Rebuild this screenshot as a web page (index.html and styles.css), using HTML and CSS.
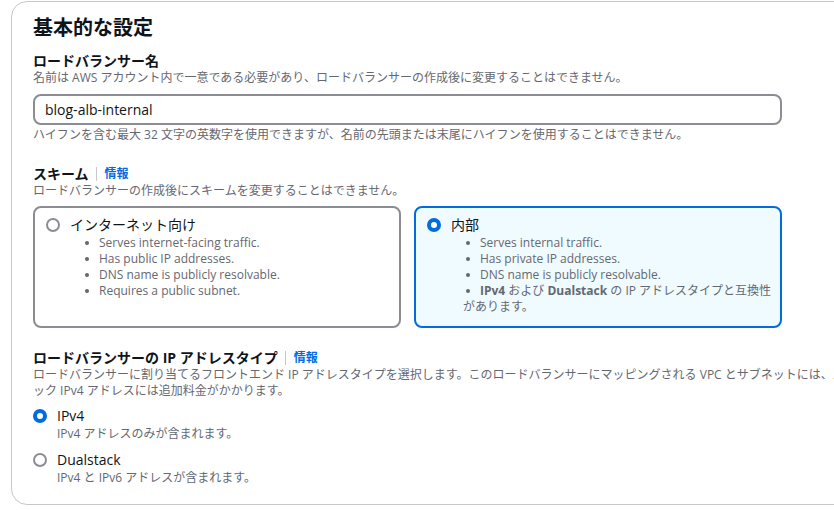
FILE: index.html
```html
<!DOCTYPE html>
<html lang="ja">
<head>
    <meta charset="UTF-8">
    <meta name="viewport" content="width=device-width, initial-scale=1.0">
    <title>基本的な設定</title>
    <link rel="stylesheet" href="styles.css">
</head>
<body>

    <div class="panel">
        <h2 class="panel-title">基本的な設定</h2>

        <div class="field">
            <div class="field-label">ロードバランサー名</div>
            <div class="field-desc">名前は AWS アカウント内で一意である必要があり、ロードバランサーの作成後に変更することはできません。</div>
            <div class="control">
                <input class="text-input" type="text" value="blog-alb-internal">
            </div>
            <div class="field-hint">ハイフンを含む最大 32 文字の英数字を使用できますが、名前の先頭または末尾にハイフンを使用することはできません。</div>
        </div>

        <div class="field field-scheme">
            <div class="field-label">
                <span>スキーム</span>
                <span class="sep"></span>
                <a href="#" class="info-link">情報</a>
            </div>
            <div class="field-desc">ロードバランサーの作成後にスキームを変更することはできません。</div>
            <div class="control tiles">
                <label class="tile">
                    <div class="tile-head">
                        <span class="radio"></span>
                        <span>インターネット向け</span>
                    </div>
                    <ul class="tile-list">
                        <li>Serves internet-facing traffic.</li>
                        <li>Has public IP addresses.</li>
                        <li>DNS name is publicly resolvable.</li>
                        <li>Requires a public subnet.</li>
                    </ul>
                </label>
                <label class="tile selected">
                    <div class="tile-head">
                        <span class="radio checked"></span>
                        <span>内部</span>
                    </div>
                    <ul class="tile-list">
                        <li>Serves internal traffic.</li>
                        <li>Has private IP addresses.</li>
                        <li>DNS name is publicly resolvable.</li>
                        <li class="nowrap"><b>IPv4</b> および <b>Dualstack</b> の IP アドレスタイプと互換性<br>があります。</li>
                    </ul>
                </label>
            </div>
        </div>

        <div class="field field-iptype">
            <div class="field-label">
                <span>ロードバランサーの IP アドレスタイプ</span>
                <span class="sep"></span>
                <a href="#" class="info-link">情報</a>
            </div>
            <div class="field-desc wide">ロードバランサーに割り当てるフロントエンド IP アドレスタイプを選択します。このロードバランサーにマッピングされる VPC とサブネットには、パブリ<br>ック IPv4 アドレスには追加料金がかかります。</div>
            <div class="radio-group">
                <label class="option">
                    <div class="option-head">
                        <span class="radio checked"></span>
                        <span>IPv4</span>
                    </div>
                    <div class="option-desc">IPv4 アドレスのみが含まれます。</div>
                </label>
                <label class="option">
                    <div class="option-head">
                        <span class="radio"></span>
                        <span>Dualstack</span>
                    </div>
                    <div class="option-desc">IPv4 と IPv6 アドレスが含まれます。</div>
                </label>
            </div>
        </div>
    </div>

</body>
</html>
```

FILE: styles.css
```css
body {
    font-family: "Open Sans", "Noto Sans CJK JP", sans-serif;
    margin: 0;
    overflow: hidden;
    background-color: #fff;
    color: #0f141a;
}


.panel {
    width: 900px;
    margin: 1px 0 0 11px;
    padding: 14px 20px 18px 21px;
    border: 1px solid #c6c6cd;
    border-radius: 16px;
}

.panel-title {
    margin: 0;
    font-size: 20px;
    line-height: 24px;
    font-weight: 700;
}


.field {
    margin-top: 12px;
}

.field-scheme {
    margin-top: 22px;
}

.field-iptype {
    margin-top: 21px;
}

.field-label {
    display: flex;
    align-items: center;
    font-size: 14px;
    line-height: 18px;
    font-weight: 700;
}

.sep {
    width: 1px;
    height: 14px;
    margin: 0 8px 0 7px;
    background-color: #c6c6cd;
}

.info-link {
    font-size: 12px;
    line-height: 16px;
    color: #006ce0;
    text-decoration: none;
}

.field-desc,
.field-hint {
    font-size: 12px;
    line-height: 16px;
    color: #656871;
}

.field-desc.wide {
    white-space: nowrap;
}

.field-hint {
    margin-top: 2px;
}


.control {
    width: 749px;
    margin-top: 8px;
}

.text-input {
    box-sizing: border-box;
    width: 100%;
    height: 31px;
    padding: 0 10px;
    border: 2px solid #8c8c94;
    border-radius: 8px;
    font-family: inherit;
    font-size: 14px;
    color: #0f141a;
    outline: none;
}


.tiles {
    display: grid;
    grid-template-columns: 1fr 1fr;
    gap: 13px;
    margin-top: 7px;
}

.tile {
    display: block;
    min-width: 0;
    padding: 7px 12px 11px 11px;
    border: 2px solid #8c8c94;
    border-radius: 8px;
    cursor: pointer;
}

.tile.selected {
    border-color: #006ce0;
    background-color: #f0fbff;
}

.tile-head,
.option-head {
    display: flex;
    align-items: center;
    gap: 10px;
    font-size: 14px;
    line-height: 20px;
}

.tile-list {
    list-style: none;
    margin: 0;
    padding: 0 0 0 36px;
    font-size: 12px;
    line-height: 16px;
    color: #656871;
}

.tile-list li.nowrap {
    white-space: nowrap;
}

.tile-list li::before {
    content: "";
    display: inline-block;
    width: 4px;
    height: 4px;
    margin: 0 10px 0 3px;
    border-radius: 50%;
    background-color: #656871;
    vertical-align: 2px;
}

.tile-list b {
    font-weight: 700;
}


.radio {
    box-sizing: border-box;
    flex: none;
    width: 14px;
    height: 14px;
    border: 2px solid #8c8c94;
    border-radius: 50%;
    background-color: #fff;
}

.radio.checked {
    border: 4px solid #006ce0;
}


.radio-group {
    margin-top: 7px;
}

.option {
    display: block;
    cursor: pointer;
}

.option + .option {
    margin-top: 8px;
}

.option-desc {
    padding-left: 24px;
    font-size: 12px;
    line-height: 16px;
    color: #656871;
}
```
